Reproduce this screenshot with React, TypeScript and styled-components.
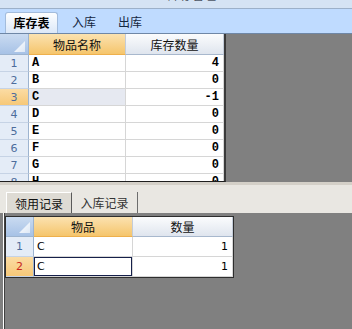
import React from 'react';
import styled, { createGlobalStyle, css } from 'styled-components';

const GlobalStyle = createGlobalStyle`
  html, body {
    margin: 0;
    padding: 0;
  }
  body {
    width: 352px;
    height: 329px;
    overflow: hidden;
    background: #808080;
    font-family: "Noto Sans CJK SC", "DejaVu Sans", sans-serif;
  }
`;

const Window = styled.div`
  display: flex;
  flex-direction: column;
  width: 352px;
  height: 329px;
`;

const TitleStrip = styled.div`
  height: 8px;
  overflow: hidden;
  background: #d5e3f4;
  border-bottom: 1px solid #9cb0c9;
  text-align: center;
  padding-left: 32px;
`;

const TitleText = styled.span`
  display: block;
  margin-top: -13px;
  font-size: 12px;
  line-height: 15px;
  color: #4b5462;
`;

const TopTabs = styled.div`
  display: flex;
  align-items: flex-end;
  height: 24px;
  padding-left: 5px;
  background: #bfdbff;
  border-bottom: 1px solid #6f87a6;
`;

const TopTab = styled.div<{ $active?: boolean }>`
  display: flex;
  align-items: center;
  justify-content: center;
  box-sizing: border-box;
  height: 21px;
  padding-bottom: 2px;
  font-size: 12px;
  color: #15283f;
  ${p =>
    p.$active
      ? css`
          width: 53px;
          margin-right: 3px;
          font-weight: bold;
          color: #000;
          border: 1px solid #a3bcdc;
          border-bottom: none;
          border-radius: 3px 3px 0 0;
          background: linear-gradient(#fdfeff, #dce8f8);
        `
      : css`
          width: 46px;
        `}
`;

const TopBody = styled.div`
  height: 148px;
  overflow: hidden;
  background: #808080;
`;

const Sheet = styled.div<{ $cols: string; $head: number; $row: number; $framed?: boolean }>`
  display: grid;
  grid-template-columns: ${p => p.$cols};
  grid-template-rows: ${p => p.$head}px;
  grid-auto-rows: ${p => p.$row}px;
  width: max-content;
  overflow: hidden;
  background: #fff;
  ${p =>
    p.$framed
      ? css`
          border: 1px solid #2e2e2e;
        `
      : css`
          height: 147px;
          border-right: 2px solid #3a3a3a;
          border-bottom: 1px solid #1e1e1e;
        `}
`;

const Corner = styled.div<{ $pad: number }>`
  display: flex;
  align-items: flex-end;
  justify-content: flex-end;
  padding: 0 3px ${p => p.$pad}px 0;
  background: linear-gradient(#cadbf1, #a7c2e6);
  border-right: 1px solid #9db4d0;
  border-bottom: 1px solid #9db4d0;

  &::after {
    content: '';
    width: 11px;
    height: 11px;
    background: linear-gradient(135deg, #ffffff, #dde8f6);
    clip-path: polygon(100% 0, 100% 100%, 0 100%);
  }
`;

const ColHead = styled.div<{ $active?: boolean }>`
  display: flex;
  align-items: center;
  justify-content: center;
  font-size: 12px;
  color: #111;
  border-right: 1px solid #c3ccd9;
  ${p =>
    p.$active
      ? css`
          background: linear-gradient(#fbe2b0, #f5c56c);
          border-bottom: 1px solid #eeb04c;
        `
      : css`
          background: linear-gradient(#fbfcfd, #dfe5ee);
          border-bottom: 1px solid #a8b8cd;
        `}
`;

const RowHead = styled.div<{ $active?: boolean; $alert?: boolean }>`
  display: flex;
  align-items: center;
  justify-content: center;
  font-family: "DejaVu Sans", sans-serif;
  font-size: 11px;
  color: ${p => (p.$alert ? '#c8261d' : '#4d6d9c')};
  border-right: 1px solid #9db4d0;
  border-bottom: 1px solid #c6d3e5;
  background: ${p => (p.$active ? 'linear-gradient(#fbdca4, #f6c878)' : '#e4ecf7')};
`;

const Cell = styled.div<{ $num?: boolean; $selected?: boolean; $current?: boolean; $mono?: boolean }>`
  display: flex;
  align-items: center;
  justify-content: ${p => (p.$num ? 'flex-end' : 'flex-start')};
  padding: 0 4px 0 3px;
  font-family: ${p => (p.$mono ? '"Liberation Mono", monospace' : '"DejaVu Sans", sans-serif')};
  font-size: ${p => (p.$mono ? '12px' : '11px')};
  font-weight: ${p => (p.$mono ? 'bold' : 'normal')};
  color: #000;
  border-right: 1px solid #d6d6d6;
  border-bottom: 1px solid #d6d6d6;
  background: ${p => (p.$selected ? '#e6e9f1' : '#fff')};
  ${p =>
    p.$current &&
    css`
      box-shadow: inset 0 0 0 1px #16204a;
    `}
`;

const Splitter = styled.div`
  height: 3px;
  background: #d4d0c8;
`;

const BottomTabs = styled.div`
  display: flex;
  align-items: flex-end;
  height: 28px;
  padding-left: 6px;
  background: #e9e7e2;
`;

const ClassicTab = styled.div<{ $active?: boolean }>`
  display: flex;
  align-items: center;
  justify-content: center;
  box-sizing: border-box;
  width: 66px;
  height: 21px;
  font-size: 12px;
  color: ${p => (p.$active ? '#111' : '#333')};
  ${p =>
    p.$active
      ? css`
          background: #dedbd4;
          border-top: 1px solid #fff;
          border-left: 1px solid #fff;
          border-right: 1px solid #5a5a5a;
        `
      : css`
          border-right: 1px solid #6d6d6d;
        `}
`;

const BottomBody = styled.div`
  flex: 1;
  margin-left: 3px;
  padding-top: 3px;
  background: #808080;
  border-left: 1px solid #ffffff;
  box-shadow: inset 1px 0 0 #404040;
  padding-left: 1px;
`;

const stock: [string, number][] = [
  ['A', 4],
  ['B', 0],
  ['C', -1],
  ['D', 0],
  ['E', 0],
  ['F', 0],
  ['G', 0],
  ['H', 0],
];

const issues: [string, number][] = [
  ['C', 1],
  ['C', 1],
];

export default function App() {
  return (
    <Window>
      <GlobalStyle />
      <TitleStrip>
        <TitleText>库存管理</TitleText>
      </TitleStrip>
      <TopTabs>
        <TopTab $active>库存表</TopTab>
        <TopTab>入库</TopTab>
        <TopTab>出库</TopTab>
      </TopTabs>
      <TopBody>
        <Sheet $cols="29px 97px 98px" $head={21} $row={17}>
          <Corner $pad={2} />
          <ColHead $active>物品名称</ColHead>
          <ColHead>库存数量</ColHead>
          {stock.map(([name, qty], i) => (
            <React.Fragment key={name}>
              <RowHead $active={i === 2}>{i + 1}</RowHead>
              <Cell $mono $selected={i === 2}>{name}</Cell>
              <Cell $mono $num>{qty}</Cell>
            </React.Fragment>
          ))}
        </Sheet>
      </TopBody>
      <Splitter />
      <BottomTabs>
        <ClassicTab $active>领用记录</ClassicTab>
        <ClassicTab>入库记录</ClassicTab>
      </BottomTabs>
      <BottomBody>
        <Sheet $cols="28px 99px 100px" $head={20} $row={20} $framed>
          <Corner $pad={3} />
          <ColHead $active>物品</ColHead>
          <ColHead>数量</ColHead>
          {issues.map(([name, qty], i) => (
            <React.Fragment key={i}>
              <RowHead $active={i === 1} $alert={i === 1}>{i + 1}</RowHead>
              <Cell $current={i === 1}>{name}</Cell>
              <Cell $num>{qty}</Cell>
            </React.Fragment>
          ))}
        </Sheet>
      </BottomBody>
    </Window>
  );
}
